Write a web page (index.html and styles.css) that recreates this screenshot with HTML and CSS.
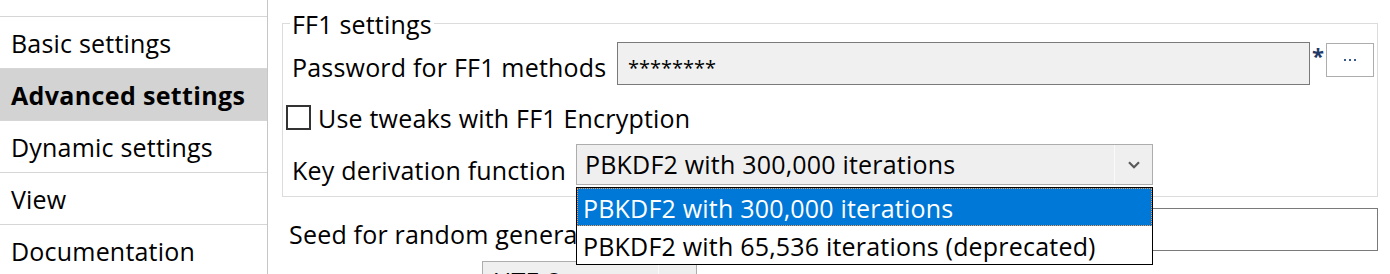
FILE: index.html
```html
<!DOCTYPE html>
<html lang="en">
<head>
<meta charset="utf-8">
<title>Settings</title>
<link rel="stylesheet" href="styles.css">
</head>
<body>
<div class="app">
  <nav class="sidebar">
    <div class="nav-top"></div>
    <div class="nav-item">Basic settings</div>
    <div class="nav-item active">Advanced settings</div>
    <div class="nav-item">Dynamic settings</div>
    <div class="nav-item">View</div>
    <div class="nav-item">Documentation</div>
  </nav>
  <main class="content">
    <fieldset class="group">
      <legend class="group-title">FF1 settings</legend>
      <div class="row pw-row">
        <span class="lbl">Password for FF1 methods</span>
        <div class="pw-input"><span class="pw-text">********</span></div>
        <span class="req">*</span>
        <div class="dots-btn">
          <svg width="12" height="2" viewBox="0 0 12 2"><rect x="0" y="0" width="2" height="2" fill="#3a5a8c"/><rect x="5" y="0" width="2" height="2" fill="#3a5a8c"/><rect x="10" y="0" width="2" height="2" fill="#3a5a8c"/></svg>
        </div>
      </div>
      <div class="row check-row">
        <span class="checkbox"></span>
        <span class="lbl check-lbl">Use tweaks with FF1 Encryption</span>
      </div>
      <div class="row kdf-row">
        <span class="lbl">Key derivation function</span>
        <div class="combo kdf-combo">
          <span class="combo-text">PBKDF2 with 300,000 iterations</span>
          <span class="combo-arrow">
            <svg width="12" height="8" viewBox="0 0 12 8"><path d="M1 1.2 L6 6.2 L11 1.2" fill="none" stroke="#5a5a5a" stroke-width="2.2"/></svg>
          </span>
          <div class="popup">
            <div class="popup-item selected">PBKDF2 with 300,000 iterations</div>
            <div class="popup-item">PBKDF2 with 65,536 iterations (deprecated)</div>
          </div>
        </div>
      </div>
    </fieldset>
    <div class="row seed-row">
      <span class="lbl">Seed for random generator</span>
      <div class="text-input"></div>
    </div>
    <div class="row enc-row">
      <div class="combo enc-combo">
        <span class="combo-text enc-text">UTF-8</span>
        <span class="combo-arrow">
          <svg width="12" height="8" viewBox="0 0 12 8"><path d="M1 1.2 L6 6.2 L11 1.2" fill="none" stroke="#5a5a5a" stroke-width="2.2"/></svg>
        </span>
      </div>
    </div>
  </main>
</div>
</body>
</html>
```

FILE: styles.css
```css
html, body {
  margin: 0;
  padding: 0;
}
body {
  width: 1390px;
  height: 274px;
  overflow: hidden;
  background: #fff;
  color: #000;
  font-family: "Open Sans", "Noto Sans", sans-serif;
  font-size: 25px;
  letter-spacing: 0.2px;
}
.app {
  display: flex;
  height: 274px;
}

/* Sidebar */
.sidebar {
  width: 267px;
  flex: none;
  border-right: 1px solid #c6c6c6;
}
.nav-top {
  height: 16px;
  border-bottom: 1px solid #d6d6d6;
}
.nav-item {
  height: 51px;
  border-bottom: 1px solid #d6d6d6;
  padding-left: 11px;
  display: flex;
  align-items: center;
  line-height: 34px;
  white-space: nowrap;
}
.nav-item.active {
  background: #d3d3d3;
  font-weight: bold;
  letter-spacing: 0.35px;
}

/* Content */
.content {
  flex: 1;
  min-width: 0;
  padding: 0 12px 0 14px;
}
.group {
  margin: 5px 0 11px;
  padding: 0 0 9px 9px;
  border: 1px solid #dcdcdc;
  min-inline-size: 0;
}
.group-title {
  margin-left: -2px;
  padding: 2px 2px 0;
  line-height: 34px;
}
.row {
  display: flex;
  align-items: flex-start;
}
.lbl {
  flex: none;
  line-height: 34px;
  white-space: nowrap;
}

/* password row */
.pw-row {
  margin-top: 1px;
}
.pw-row .lbl {
  width: 325px;
  margin-top: 8px;
}
.pw-input {
  width: 693px;
  height: 43px;
  box-sizing: border-box;
  border: 1px solid #7a7a7a;
  background: #f0f0f0;
  padding: 8px 0 0 10px;
  overflow: hidden;
  flex: none;
}
.pw-text {
  font-size: 20px;
  line-height: 34px;
  display: block;
  letter-spacing: 0;
}
.req {
  width: 13px;
  margin: -4px 0 0 2px;
  color: #1f3a66;
  font-weight: bold;
  font-size: 22px;
  line-height: 34px;
  flex: none;
  letter-spacing: 0;
}
.dots-btn {
  width: 48px;
  height: 34px;
  margin: 1px 0 0 1px;
  box-sizing: border-box;
  border: 1px solid #adadad;
  background: #fff;
  display: flex;
  align-items: center;
  justify-content: center;
  flex: none;
}

/* checkbox row */
.check-row {
  height: 59px;
}
.checkbox {
  width: 25px;
  height: 25px;
  box-sizing: border-box;
  border: 2px solid #333;
  background: #fff;
  margin: 20px 7px 0 -6px;
  flex: none;
}
.check-lbl {
  margin-top: 16px;
}

/* kdf row */
.kdf-row .lbl {
  width: 284px;
  margin-top: 9px;
}
.combo {
  position: relative;
  height: 41px;
  box-sizing: border-box;
  border: 1px solid #adadad;
  background: #efefef;
  display: flex;
  flex: none;
}
.kdf-combo {
  width: 577px;
}
.combo-text {
  flex: 1;
  padding: 2px 0 0 8px;
  line-height: 34px;
  white-space: nowrap;
  overflow: hidden;
}
.combo-arrow {
  width: 37px;
  border-left: 1px solid #fafafa;
  display: flex;
  align-items: center;
  justify-content: center;
}
.popup {
  position: absolute;
  left: -1px;
  top: 42px;
  width: 577px;
  height: 78px;
  box-sizing: border-box;
  border: 1px solid #000;
  background: #fff;
  z-index: 10;
}
.popup-item {
  height: 38px;
  box-sizing: border-box;
  padding: 3px 0 0 6px;
  line-height: 34px;
  white-space: nowrap;
}
.popup-item.selected {
  background: #0078d7;
  color: #fff;
  outline: 1px dotted #f59a4a;
  outline-offset: -1px;
}

/* seed row */
.seed-row {
  padding-left: 7px;
}
.seed-row .lbl {
  width: 328px;
  margin-top: 9px;
}
.text-input {
  flex: 1;
  height: 43px;
  box-sizing: border-box;
  border: 1px solid #7a7a7a;
  background: #fff;
}

/* encoding row */
.enc-row {
  margin-top: 10px;
}
.enc-combo {
  width: 215px;
  margin-left: 200px;
}
.enc-text {
  padding-left: 10px;
}
```
